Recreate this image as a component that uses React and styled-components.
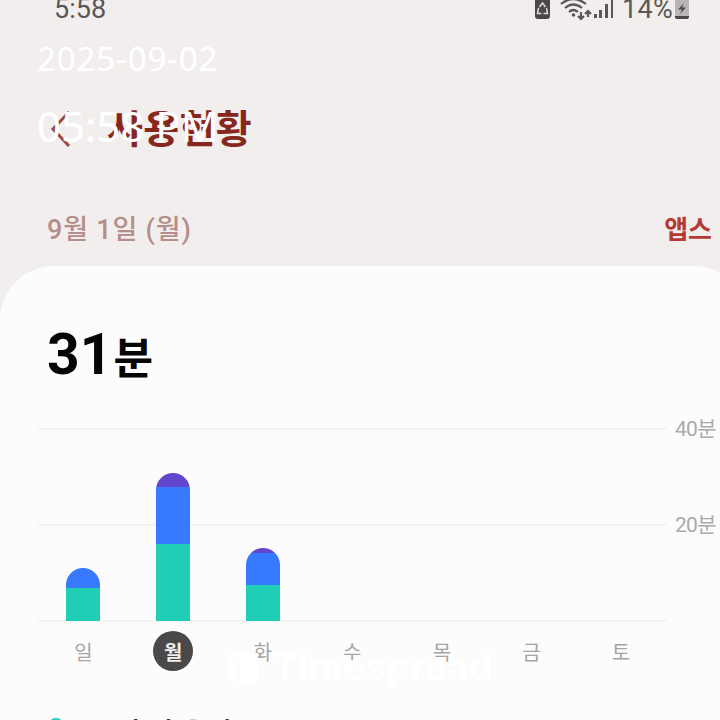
import React from 'react';
import styled, { createGlobalStyle } from 'styled-components';

const GlobalStyle = createGlobalStyle`
  * {
    box-sizing: border-box;
  }

  body {
    margin: 0;
    overflow: hidden;
    font-family: Roboto, 'Noto Sans CJK KR', sans-serif;
  }
`;

const Screen = styled.div`
  position: relative;
  display: flex;
  flex-direction: column;
  width: 720px;
  height: 720px;
  overflow: hidden;
  background: #f2eeed;
`;

const StatusBar = styled.header`
  display: flex;
  flex: none;
  justify-content: space-between;
  height: 98px;
  padding: 0 30px 0 54px;
  color: #5a5756;
  font-size: 27px;
  line-height: 30px;
`;

const Clock = styled.span`
  margin-top: -6px;
`;

const StatusIcons = styled.div`
  display: flex;
  align-items: flex-start;
  height: 22px;
`;

const Battery = styled.span`
  margin: -6px 1px 0 8px;
  letter-spacing: 0.3px;
`;

const TitleBar = styled.div`
  display: flex;
  flex: none;
  align-items: center;
  height: 62px;
  padding-left: 49px;
  color: #862820;
`;

const Title = styled.h1`
  margin: 2px 0 0 36px;
  font-size: 39px;
  font-weight: 700;
  line-height: 62px;
  letter-spacing: 0.4px;
`;

const DateRow = styled.div`
  display: flex;
  flex: none;
  justify-content: space-between;
  height: 106px;
  padding: 50px 8px 0 47px;
  font-size: 27px;
  font-weight: 500;
  line-height: 40px;
  white-space: nowrap;
`;

const DateLabel = styled.span`
  color: #b58e8b;
  letter-spacing: 0.8px;
`;

const AppsLink = styled.span`
  color: #b33b33;
  font-size: 26px;
  font-weight: 700;
`;

const Card = styled.main`
  display: flex;
  flex: none;
  flex-direction: column;
  width: 748px;
  height: 500px;
  border-radius: 54px 54px 0 0;
  background: #fcfcfc;
`;

const Total = styled.div`
  display: flex;
  align-items: baseline;
  height: 162px;
  padding: 50px 0 0 47px;
  color: #050505;
  font-size: 57px;
  font-weight: 700;
  line-height: 78px;

  small {
    margin: 0 0 0 1px;
    font-size: 43px;
  }
`;

const Chart = styled.section`
  display: grid;
  grid-template-columns: 629px 60px;
  height: 194px;
  margin-left: 38px;
`;

const Plot = styled.div`
  display: grid;
  grid-template-columns: repeat(7, 89.8px);
  align-items: end;
  height: 194px;
  overflow: hidden;
  background: linear-gradient(#f3f3f3, #f3f3f3) 0 0 / 100% 2px no-repeat,
    linear-gradient(#f3f3f3, #f3f3f3) 0 96px / 100% 2px no-repeat,
    linear-gradient(#f3f3f3, #f3f3f3) 0 192px / 100% 2px no-repeat;
`;

const Bar = styled.div`
  display: flex;
  flex-direction: column;
  width: 34px;
  margin: 0 0 1px 28px;
  overflow: hidden;
  border-radius: 17px 17px 0 0;
`;

const Segment = styled.div`
  background: ${props => props.$color};
`;

const Axis = styled.div`
  display: flex;
  flex-direction: column;
  gap: 66px;
  margin-top: -14px;
  padding-left: 8px;
  color: #aaa;
  font-size: 21px;
  line-height: 30px;
  letter-spacing: -0.7px;
  white-space: nowrap;
`;

const Days = styled.div`
  display: grid;
  grid-template-columns: repeat(7, 89.6px);
  height: 79px;
  padding: 9px 0 0 38px;
`;

const Day = styled.span`
  display: flex;
  align-items: center;
  justify-content: center;
  width: 40px;
  height: 40px;
  margin-left: 25px;
  padding-left: 1px;
  border-radius: 50%;
  background: ${props => (props.$active ? '#494949' : 'transparent')};
  color: ${props => (props.$active ? '#eee' : '#a5a5a5')};
  font-size: 20px;
  font-weight: ${props => (props.$active ? 700 : 400)};
`;

const Legend = styled.div`
  display: flex;
  align-items: flex-start;
  padding: 12px 51px 0 48px;
  color: #303030;
  font-size: 29px;
  font-weight: 500;
  line-height: 42px;
`;

const Dot = styled.i`
  width: 16px;
  height: 16px;
  margin: 5px 24px 0 0;
  border-radius: 50%;
  background: #20ceb5;
`;

const Category = styled.span`
  letter-spacing: -0.6px;
`;

const Minutes = styled.span`
  margin-left: auto;
  color: #777;
  font-size: 26px;
  font-weight: 400;
`;

const Stamp = styled.div`
  position: absolute;
  top: 38px;
  left: 37px;
  color: #fff;
  font-family: 'Noto Sans', 'Noto Sans CJK KR', sans-serif;
  white-space: nowrap;
`;

const StampDate = styled.div`
  font-size: 33px;
  line-height: 42px;
  letter-spacing: 0.9px;
`;

const StampTime = styled.div`
  margin-top: 21px;
  font-size: 42px;
  line-height: 50px;
`;

const Watermark = styled.div`
  position: absolute;
  top: 646px;
  left: 229px;
  display: flex;
  align-items: center;
  gap: 15px;
  color: #fff;
  font-family: Inter, sans-serif;
  font-size: 37px;
  font-weight: 800;
  line-height: 42px;
`;

const GREEN = '#20ceb5';
const BLUE = '#387aff';
const PURPLE = '#6246cc';

const bars = [
  [[BLUE, 20], [GREEN, 33]],
  [[PURPLE, 14], [BLUE, 57], [GREEN, 77]],
  [[PURPLE, 5], [BLUE, 32], [GREEN, 36]],
];

const days = ['일', '월', '화', '수', '목', '금', '토'];

const PowerSavingIcon = () => (
  <svg width="18" height="20" viewBox="0 0 18 20">
    <path d="M1 0h15v16q0 3-3 3H4q-3 0-3-3z" fill="#4b4847" />
    <path d="M5.500 7l3-4 3 4M12.500 8l1 5.500H9.500M7.500 13.500H3.500l1-5.500" fill="none" stroke="#ddd" strokeWidth="1.5" />
  </svg>
);

const WifiIcon = () => (
  <svg width="34" height="22" viewBox="0 0 34 22">
    <g fill="none" stroke="#5a5756" strokeWidth="2.2">
      <path d="M1 4Q13-6 26 4M5 8q8-7 17 0M9 12q4-4 9 0" />
      <path d="M21 12v6m-3-2l3 3 3-3M28 17v-5m-3 2l3-3 3 3" />
    </g>
    <circle cx="13.5" cy="15" r="1.8" fill="#5a5756" />
  </svg>
);

const SignalIcon = () => (
  <svg width="20" height="19" viewBox="0 0 20 19">
    <path d="M0 14h3v4H0zM5 10h3v8H5zM11 4h3v14h-3zM17 0h2v18h-2z" fill="#5a5756" />
  </svg>
);

const ChargingIcon = () => (
  <svg width="16" height="20" viewBox="0 0 16 20">
    <path d="M1 0h14v16H1z" fill="#b9b5b4" />
    <path d="M1 16h14v1q0 2-2 2H3q-2 0-2-2z" fill="#4b4847" />
    <path d="M10 3L4 9.500h4L6 14l6-6.500H8z" fill="#4b4847" />
  </svg>
);

const BackIcon = () => (
  <svg width="22" height="38" viewBox="0 0 22 38">
    <path d="M20 2L4 19l16 17" fill="none" stroke="#9b4a43" strokeWidth="3" />
  </svg>
);

const LogoMark = () => (
  <svg width="29" height="29" viewBox="0 0 29 29" fill="#fff">
    <circle cx="4" cy="4" r="4" />
    <path d="M10 0h19v9H10zM0 10h8v19H0zM10 10h19v19H10z" />
  </svg>
);

const App = () => (
  <Screen>
    <GlobalStyle />
    <StatusBar>
      <Clock>5:58</Clock>
      <StatusIcons>
        <PowerSavingIcon />
        <span style={{ width: 8 }} />
        <WifiIcon />
        <SignalIcon />
        <Battery>14%</Battery>
        <ChargingIcon />
      </StatusIcons>
    </StatusBar>
    <TitleBar>
      <BackIcon />
      <Title>사용현황</Title>
    </TitleBar>
    <DateRow>
      <DateLabel>9월 1일 (월)</DateLabel>
      <AppsLink>앱스</AppsLink>
    </DateRow>
    <Card>
      <Total>
        31<small>분</small>
      </Total>
      <Chart>
        <Plot>
          {bars.map((segments, i) => (
            <Bar key={days[i]}>
              {segments.map(([color, height]) => (
                <Segment key={color} $color={color} style={{ height }} />
              ))}
            </Bar>
          ))}
        </Plot>
        <Axis>
          <span>40분</span>
          <span>20분</span>
        </Axis>
      </Chart>
      <Days>
        {days.map(day => (
          <Day key={day} $active={day === '월'}>
            {day}
          </Day>
        ))}
      </Days>
      <Legend>
        <Dot />
        <Category>쇼핑 및 음식</Category>
        <Minutes>16분</Minutes>
      </Legend>
    </Card>
    <Stamp>
      <StampDate>2025-09-02</StampDate>
      <StampTime>05:58 PM</StampTime>
    </Stamp>
    <Watermark>
      <LogoMark />
      <span>Timespread</span>
    </Watermark>
  </Screen>
);

export default App;
